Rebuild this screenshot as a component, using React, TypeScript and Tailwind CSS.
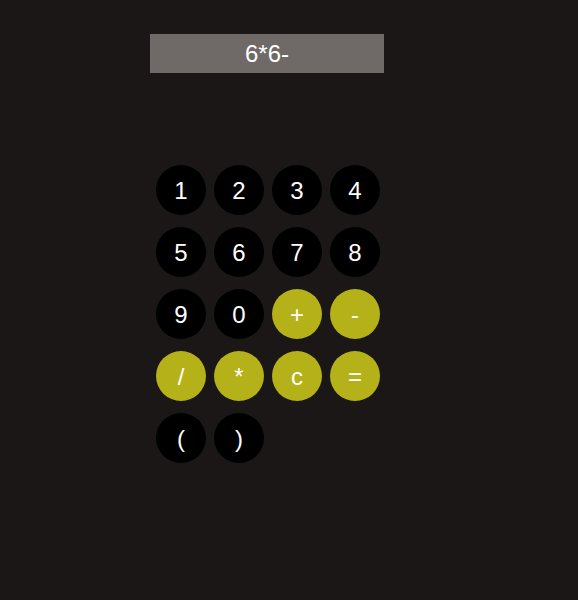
const keys: { label: string; op?: boolean }[] = [
  { label: "1" },
  { label: "2" },
  { label: "3" },
  { label: "4" },
  { label: "5" },
  { label: "6" },
  { label: "7" },
  { label: "8" },
  { label: "9" },
  { label: "0" },
  { label: "+", op: true },
  { label: "-", op: true },
  { label: "/", op: true },
  { label: "*", op: true },
  { label: "c", op: true },
  { label: "=", op: true },
  { label: "(" },
  { label: ")" },
];

const App = () => {
  return (
    <div
      className="min-h-[600px] w-full bg-[#1a1716] pt-[34px]"
      style={{ fontFamily: '"Liberation Sans", Arial, sans-serif' }}
    >
      <div className="ml-[150px] flex h-[39px] w-[234px] items-center justify-center bg-[#6f6967] text-[24px] text-white">
        6*6-
      </div>

      <div className="ml-[156px] mt-[92px] grid grid-cols-[repeat(4,50px)] gap-x-2 gap-y-3">
        {keys.map((k) => (
          <button
            key={k.label}
            className={`flex h-[50px] w-[50px] items-center justify-center rounded-full pt-[2px] text-[24px] text-white ${
              k.op ? "bg-[#b5b118]" : "bg-black"
            }`}
          >
            {k.label}
          </button>
        ))}
      </div>
    </div>
  );
};

export default App;
